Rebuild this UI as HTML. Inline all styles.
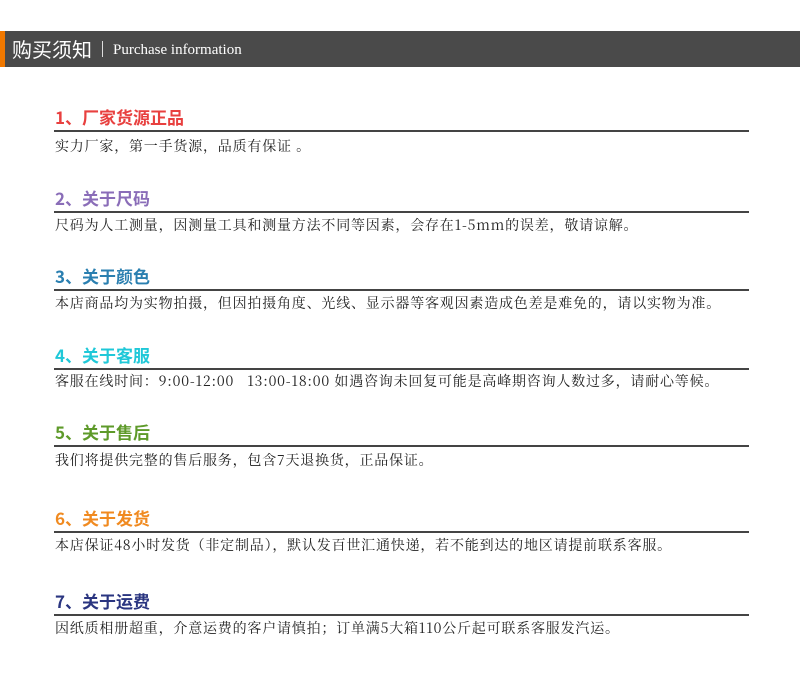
<!DOCTYPE html>
<html><head><meta charset="utf-8"><style>
body{margin:0;width:800px;height:678px;background:#fff;position:relative;overflow:hidden}
.bar{position:absolute;left:0;top:31px;width:800px;height:36px;background:#4a4a4a}
.or{position:absolute;left:0;top:31px;width:5px;height:36px;background:#f07800}
.h1{position:absolute;left:12px;top:36px;color:#fff;font:20px "Noto Sans CJK SC",sans-serif;line-height:26px}
.sep{position:absolute;left:102px;top:41px;width:1px;height:16px;background:#ddd}
.en{position:absolute;left:113px;top:40px;color:#fff;font:15px "Liberation Serif",serif;line-height:20px}
.t{position:absolute;left:55px;font:bold 17px "Noto Sans CJK SC",sans-serif;line-height:20px}
.l{position:absolute;left:54px;width:695px;height:2px;background:#444}
.b{position:absolute;left:55px;font:14px "Noto Serif CJK SC",serif;letter-spacing:0.8px;color:#222;line-height:18px;white-space:nowrap}
</style></head><body>
<div class="bar"></div><div class="or"></div>
<div class="h1">购买须知</div><div class="sep"></div><div class="en">Purchase information</div>

<div class="t" style="top:107px;color:#e8403f">1、厂家货源正品</div><div class="l" style="top:130px"></div>
<div class="b" style="top:137px">实力厂家，第一手货源，品质有保证 。</div>

<div class="t" style="top:188px;color:#8a6db8">2、关于尺码</div><div class="l" style="top:211px"></div>
<div class="b" style="top:216px">尺码为人工测量，因测量工具和测量方法不同等因素，会存在1-5mm的误差，敬请谅解。</div>

<div class="t" style="top:266px;color:#2a7fb0">3、关于颜色</div><div class="l" style="top:289px"></div>
<div class="b" style="top:294px">本店商品均为实物拍摄，但因拍摄角度、光线、显示器等客观因素造成色差是难免的，请以实物为准。</div>

<div class="t" style="top:345px;color:#1fc8d8">4、关于客服</div><div class="l" style="top:368px"></div>
<div class="b" style="top:372px">客服在线时间：9:00-12:00&nbsp;&nbsp;&nbsp;13:00-18:00 如遇咨询未回复可能是高峰期咨询人数过多，请耐心等候。</div>

<div class="t" style="top:422px;color:#5e9a2a">5、关于售后</div><div class="l" style="top:445px"></div>
<div class="b" style="top:451px">我们将提供完整的售后服务，包含7天退换货，正品保证。</div>

<div class="t" style="top:508px;color:#f08a20">6、关于发货</div><div class="l" style="top:531px"></div>
<div class="b" style="top:536px">本店保证48小时发货（非定制品），默认发百世汇通快递，若不能到达的地区请提前联系客服。</div>

<div class="t" style="top:591px;color:#2a3580">7、关于运费</div><div class="l" style="top:614px"></div>
<div class="b" style="top:619px">因纸质相册超重，介意运费的客户请慎拍；订单满5大箱110公斤起可联系客服发汽运。</div>
</body></html>
